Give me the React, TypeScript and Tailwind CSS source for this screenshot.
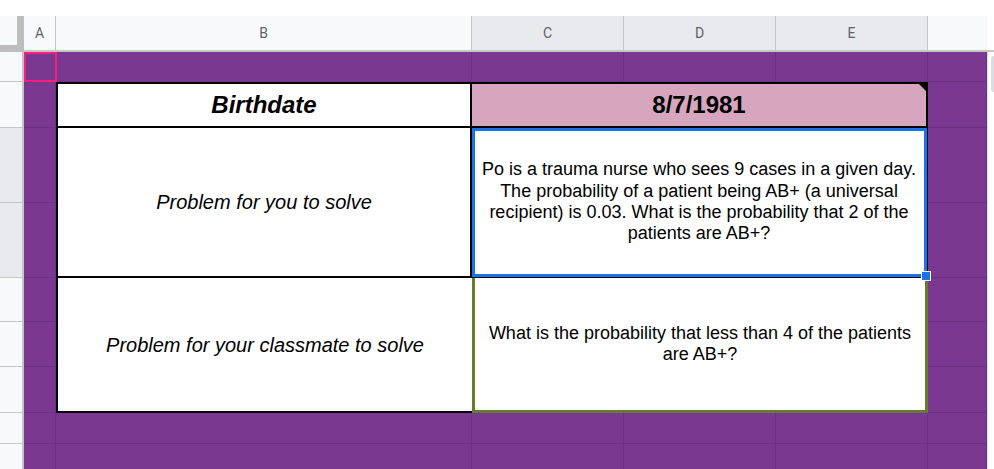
import React from "react";

const font = "font-['Liberation_Sans',Arial,sans-serif]";

// heights of the sheet rows, in px (row 3 and row 4 are merged from several rows)
const rowHeights = ["h-[30px]", "h-[46px]", "h-[75px]", "h-[75px]", "h-[44px]", "h-[45px]", "h-[46px]", "h-[31px]", "h-[31px]"];

function RowHeaders() {
  return (
    <div className="w-[24px] shrink-0 border-r-2 border-[#c4c7c5] bg-[#f8f9fa] flex flex-col">
      {rowHeights.map((h, i) => (
        <div
          key={i}
          className={`${h} shrink-0 border-b border-[#c4c7c5] ${i === 2 || i === 3 ? "bg-[#e8eaed]" : ""}`}
        />
      ))}
    </div>
  );
}

function ColumnHeaders() {
  const label = "flex items-center justify-center border-r border-[#c4c7c5] text-[14px] text-[#5f6368] font-['Roboto',sans-serif]";
  return (
    <div className="flex h-[36px] border-b-2 border-[#c4c7c5]">
      {/* frozen corner */}
      <div className="w-[24px] shrink-0 bg-[#bdbdbd] -mb-[2px]">
        <div className="w-[17px] h-[29px] bg-[#f8f9fa]" />
      </div>
      <div className={`${label} w-[32px] bg-[#f8f9fa]`}>A</div>
      <div className={`${label} w-[416px] bg-[#f8f9fa]`}>B</div>
      <div className={`${label} w-[152px] bg-[#e8eaed]`}>C</div>
      <div className={`${label} w-[152px] bg-[#e8eaed]`}>D</div>
      <div className={`${label} w-[152px] bg-[#e8eaed]`}>E</div>
      <div className={`${label} w-[59px] bg-[#f8f9fa] border-r-0`} />
      <div className="flex-1 bg-white" />
    </div>
  );
}

function Sheet() {
  const plain = "border-r border-b border-[#6c3181]";
  const cells = Array.from({ length: 30 }, (_, i) => <div key={i} className={plain} />);

  return (
    <div
      className={`grid grid-cols-[32px_416px_152px_152px_152px_59px] grid-rows-[30px_46px_75px_75px_44px_45px_46px_31px_31px] bg-[#7b3891] ${font}`}
    >
      {/* header row of the table */}
      <div className="col-start-2 row-start-2 bg-white border-2 border-black flex items-center justify-center">
        <span className="text-[24px] font-bold italic text-black">Birthdate</span>
      </div>
      <div className="col-start-3 col-span-3 row-start-2 relative bg-[#d5a6bd] border-t-2 border-r-2 border-b-2 border-black flex items-center justify-center">
        <span className="text-[24px] font-bold text-black">8/7/1981</span>
        <div className="absolute top-0 right-0 w-0 h-0 border-l-[7px] border-l-transparent border-t-[7px] border-t-black" />
      </div>

      {/* problem for you */}
      <div className="col-start-2 row-start-3 row-span-2 bg-white border-l-2 border-r-2 border-b-2 border-black flex items-center justify-center">
        <span className="text-[20px] italic text-black">Problem for you to solve</span>
      </div>
      <div className="col-start-3 col-span-3 row-start-3 row-span-2 relative bg-white border-r-2 border-b-2 border-black flex items-center justify-center px-[3px]">
        <p className="text-[18px] leading-[21.3px] text-black text-center">
          Po is a trauma nurse who sees 9 cases in a given day. The probability of a patient being AB+ (a universal
          recipient) is 0.03. What is the probability that 2 of the patients are AB+?
        </p>
        {/* selection outline */}
        <div className="absolute top-0 left-0 -right-[1px] -bottom-[1px] border-[3px] border-[#1a73e8] z-10" />
        <div className="absolute -right-[5px] -bottom-[5px] w-[10px] h-[10px] bg-[#1a73e8] border border-white z-20" />
      </div>

      {/* problem for classmate */}
      <div className="col-start-2 row-start-5 row-span-3 bg-white border-l-2 border-b-2 border-black flex items-center justify-center">
        <span className="text-[20px] italic text-black">Problem for your classmate to solve</span>
      </div>
      <div className="col-start-3 col-span-3 row-start-5 row-span-3 bg-white border-[3px] border-t-0 border-[#687a30] flex items-center justify-center px-[3px]">
        <p className="text-[18px] leading-[21px] text-black text-center">
          What is the probability that less than 4 of the patients are AB+?
        </p>
      </div>

      {cells}

      {/* active cell A1 */}
      <div className="col-start-1 row-start-1 border-2 border-[#f5217e] -mr-[1px]" />
    </div>
  );
}

export default function App() {
  return (
    <div className="w-[994px] h-[469px] overflow-hidden bg-white flex flex-col">
      <div className="h-[16px] shrink-0 bg-white" />
      <ColumnHeaders />
      <div className="flex flex-1 min-h-0">
        <RowHeaders />
        <Sheet />
        <div className="flex-1 bg-white border-l border-[#e0e0e0] pt-[4px] pl-[3px]">
          <div className="h-[36px] bg-[#dadce0] rounded-l-full" />
        </div>
      </div>
    </div>
  );
}
